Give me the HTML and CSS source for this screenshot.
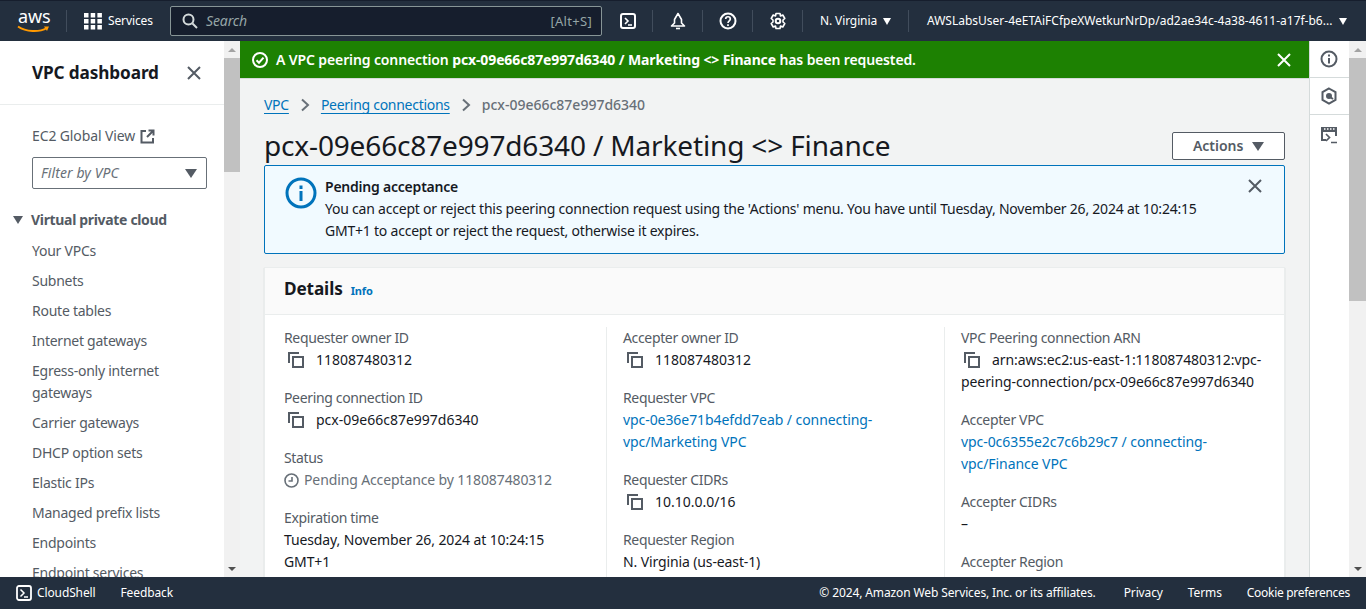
FILE: index.html
```html
<!DOCTYPE html>
<html lang="en">
<head>
    <meta charset="UTF-8">
    <title>pcx-09e66c87e997d6340 / Marketing &lt;&gt; Finance | VPC Console</title>
    <link rel="stylesheet" href="styles.css">
</head>
<body>
    <header class="topbar">
        <div class="logo">
            <span class="logo-text">aws</span>
            <svg class="logo-smile" width="33" height="8" viewBox="0 0 33 8"><path d="M1 1.500C9 7 22 7.500 30 3" fill="none" stroke="#f90" stroke-width="2"/><path d="M27 1.500L32 1.500L30 6Z" fill="#f90"/></svg>
        </div>
        <div class="services">
            <svg width="18" height="18" viewBox="0 0 18 18" fill="#fff"><rect x="0" y="1" width="4.500" height="4.500"/><rect x="6.700" y="1" width="4.500" height="4.500"/><rect x="13.400" y="1" width="4.500" height="4.500"/><rect x="0" y="7" width="4.500" height="4.500"/><rect x="6.700" y="7" width="4.500" height="4.500"/><rect x="13.400" y="7" width="4.500" height="4.500"/><rect x="0" y="13" width="4.500" height="4.500"/><rect x="6.700" y="13" width="4.500" height="4.500"/><rect x="13.400" y="13" width="4.500" height="4.500"/></svg>
            <span>Services</span>
        </div>
        <div class="search">
            <svg width="16" height="16" viewBox="0 0 16 16" fill="none" stroke="#d5dbdb" stroke-width="2"><circle cx="6.500" cy="6.500" r="5"/><path d="M10.500 10.500L15 15"/></svg>
            <span class="search-text">Search</span>
            <span class="search-key">[Alt+S]</span>
        </div>
        <div class="tool tool-first">
            <svg width="18" height="18" viewBox="0 0 18 18" fill="none" stroke="#fff" stroke-width="2"><rect x="2" y="2" width="14" height="14" rx="2"/><path d="M6 6l3 3-3 3M9 13h4" stroke-width="1.600"/></svg>
        </div>
        <div class="tool">
            <svg width="18" height="18" viewBox="0 0 18 18" fill="none" stroke="#fff" stroke-width="1.600"><path d="M9 1.500L5.500 7.500V11L2.500 14H15.500L12.500 11V7.500Z" stroke-linejoin="round"/><path d="M7 16.500h4"/></svg>
        </div>
        <div class="tool">
            <svg width="18" height="18" viewBox="0 0 18 18" fill="none" stroke="#fff" stroke-width="2"><circle cx="9" cy="9" r="7.500"/><path d="M6.700 7C6.700 4 11.300 4 11.300 7C11.300 8.800 9 8.800 9 11" stroke-width="1.700"/><path d="M9 12.200v1.800" stroke-width="1.700"/></svg>
        </div>
        <div class="tool">
            <svg width="18" height="18" viewBox="0 0 18 18" fill="none" stroke="#fff" stroke-width="2"><path d="M7 1.500h4l.5 2.500 2.300-1 2 3.500-1.800 1.500 0 1-0 1 1.800 1.500-2 3.500-2.300-1-.5 2.500h-4l-.5-2.500-2.300 1-2-3.500 1.800-1.500 0-2-1.800-1.500 2-3.500 2.300 1z" stroke-linejoin="round" stroke-width="1.600"/><circle cx="9" cy="9" r="2.300"/></svg>
        </div>
        <div class="region">N. Virginia <i class="caret caret-white"></i></div>
        <div class="account"><span>AWSLabsUser-4eETAiFCfpeXWetkurNrDp/ad2ae34c-4a38-4611-a17f-b6...</span> <i class="caret caret-white"></i></div>
    </header>

    <div class="main">
        <aside class="sidenav">
            <div class="sidenav-head">
                <h2>VPC dashboard</h2>
                <svg width="16" height="16" viewBox="0 0 16 16" stroke="#545b64" stroke-width="2"><path d="M2 2l12 12M14 2L2 14"/></svg>
            </div>
            <div class="sidenav-body">
                <div class="ec2-link">EC2 Global View
                    <svg width="15" height="15" viewBox="0 0 15 15" fill="none" stroke="#545b64" stroke-width="2"><path d="M6 2H1.500V13.500H13V9"/><path d="M7 8L13 2M8.500 1.500H13.500V6.500"/></svg>
                </div>
                <div class="vpc-filter"><em>Filter by VPC</em><i class="caret"></i></div>
                <div class="nav-section"><i class="caret"></i>Virtual private cloud</div>
                <ul class="nav-list">
                    <li>Your VPCs</li>
                    <li>Subnets</li>
                    <li>Route tables</li>
                    <li>Internet gateways</li>
                    <li>Egress-only internet gateways</li>
                    <li>Carrier gateways</li>
                    <li>DHCP option sets</li>
                    <li>Elastic IPs</li>
                    <li>Managed prefix lists</li>
                    <li>Endpoints</li>
                    <li>Endpoint services</li>
                </ul>
            </div>
        </aside>
        <div class="scrollbar scrollbar-nav">
            <div class="arrow arrow-up"></div>
            <div class="track"><div class="thumb"></div></div>
            <div class="arrow arrow-down"></div>
        </div>

        <main class="content">
            <div class="flash">
                <svg width="16" height="16" viewBox="0 0 16 16" fill="none" stroke="#fff" stroke-width="2"><circle cx="8" cy="8" r="7"/><path d="M4.500 8.200l2.500 2.500 4.500-5"/></svg>
                <p>A VPC peering connection <b>pcx-09e66c87e997d6340 / Marketing &lt;&gt; Finance</b> has been requested.</p>
                <svg width="16" height="16" viewBox="0 0 16 16" stroke="#fff" stroke-width="2"><path d="M2 2l12 12M14 2L2 14"/></svg>
            </div>
            <div class="page">
                <nav class="crumbs">
                    <a href="#">VPC</a>
                    <svg width="10" height="14" viewBox="0 0 10 14" fill="none" stroke="#687078" stroke-width="2"><path d="M2 1.500l6 5.500-6 5.500"/></svg>
                    <a href="#">Peering connections</a>
                    <svg width="10" height="14" viewBox="0 0 10 14" fill="none" stroke="#687078" stroke-width="2"><path d="M2 1.500l6 5.500-6 5.500"/></svg>
                    <span>pcx-09e66c87e997d6340</span>
                </nav>
                <div class="title-row">
                    <h1>pcx-09e66c87e997d6340 / Marketing &lt;&gt; Finance</h1>
                    <button class="actions">Actions <i class="caret"></i></button>
                </div>
                <div class="alert">
                    <svg class="alert-icon" width="32" height="32" viewBox="0 0 32 32" fill="none" stroke="#0073bb" stroke-width="3"><circle cx="16" cy="16" r="14"/><path d="M16 14v10"/><path d="M16 8.500v3.500"/></svg>
                    <div class="alert-text">
                        <strong>Pending acceptance</strong>
                        <p>You can accept or reject this peering connection request using the 'Actions' menu. You have until Tuesday, November 26, 2024 at 10:24:15 GMT+1 to accept or reject the request, otherwise it expires.</p>
                    </div>
                    <svg class="alert-close" width="16" height="16" viewBox="0 0 16 16" stroke="#545b64" stroke-width="2"><path d="M2 2l12 12M14 2L2 14"/></svg>
                </div>
                <section class="card">
                    <div class="card-head">
                        <h2>Details</h2>
                        <a href="#">Info</a>
                    </div>
                    <div class="columns">
                        <div class="col">
                            <div class="field"><label>Requester owner ID</label><div class="copy"><svg class="copy-icon" viewBox="0 0 16 16"><path d="M1 11V1H11M5 5H15V15H5Z"/></svg>118087480312</div></div>
                            <div class="field"><label>Peering connection ID</label><div class="copy"><svg class="copy-icon" viewBox="0 0 16 16"><path d="M1 11V1H11M5 5H15V15H5Z"/></svg>pcx-09e66c87e997d6340</div></div>
                            <div class="field"><label>Status</label><div class="status"><svg width="15" height="15" viewBox="0 0 15 15" fill="none" stroke="#687078" stroke-width="1.600"><circle cx="7.500" cy="7.500" r="6.500"/><path d="M8 4v4H4.500"/></svg>Pending Acceptance by 118087480312</div></div>
                            <div class="field"><label>Expiration time</label><div>Tuesday, November 26, 2024 at 10:24:15 GMT+1</div></div>
                        </div>
                        <div class="col">
                            <div class="field"><label>Accepter owner ID</label><div class="copy"><svg class="copy-icon" viewBox="0 0 16 16"><path d="M1 11V1H11M5 5H15V15H5Z"/></svg>118087480312</div></div>
                            <div class="field"><label>Requester VPC</label><div class="vpc-link"><a href="#">vpc-0e36e71b4efdd7eab / connecting-vpc/Marketing VPC</a></div></div>
                            <div class="field"><label>Requester CIDRs</label><div class="copy"><svg class="copy-icon" viewBox="0 0 16 16"><path d="M1 11V1H11M5 5H15V15H5Z"/></svg>10.10.0.0/16</div></div>
                            <div class="field"><label>Requester Region</label><div>N. Virginia (us-east-1)</div></div>
                        </div>
                        <div class="col">
                            <div class="field"><label>VPC Peering connection ARN</label><div class="arn"><svg class="copy-icon" viewBox="0 0 16 16"><path d="M1 11V1H11M5 5H15V15H5Z"/></svg>arn:aws:ec2:us-east-1:118087480312:vpc-peering-connection/pcx-09e66c87e997d6340</div></div>
                            <div class="field"><label>Accepter VPC</label><div class="vpc-link"><a href="#">vpc-0c6355e2c7c6b29c7 / connecting-vpc/Finance VPC</a></div></div>
                            <div class="field"><label>Accepter CIDRs</label><div>–</div></div>
                            <div class="field"><label>Accepter Region</label></div>
                        </div>
                    </div>
                </section>
            </div>
        </main>

        <aside class="tools-rail">
            <div class="rail-item"><svg width="18" height="18" viewBox="0 0 18 18" fill="none" stroke="#545b64" stroke-width="2"><circle cx="9" cy="9" r="7.500"/><path d="M9 8v5.500M9 4.500v2"/></svg></div>
            <div class="rail-item"><svg width="18" height="18" viewBox="0 0 18 18" fill="none" stroke="#545b64" stroke-width="2"><path d="M9 1.500l6.500 3.700v7.600L9 16.500l-6.500-3.700V5.200z"/><circle cx="9" cy="9" r="2" fill="#545b64"/><path d="M10 10l3 2"/></svg></div>
            <div class="rail-item rail-last"><svg width="18" height="18" viewBox="0 0 18 18" fill="none"><path d="M1 1H17V10H15V6H3V13H6V15H1Z" fill="#545b64"/><path d="M4 3h1.500M7 3h1.500M10 3h1.500M13 3h1.500" stroke="#fff" stroke-width="1.500"/><path d="M6 8l3.500 3.500L6 15M11 16.500h6" stroke="#545b64" stroke-width="1.700"/></svg></div>
        </aside>
        <div class="scrollbar scrollbar-page">
            <div class="arrow arrow-up"></div>
            <div class="track"><div class="thumb"></div></div>
            <div class="arrow arrow-down"></div>
        </div>
    </div>

    <footer class="bottombar">
        <div class="cloudshell">
            <svg width="16" height="16" viewBox="0 0 16 16" fill="none" stroke="#fff" stroke-width="1.800"><rect x="1" y="1" width="14" height="14" rx="2"/><path d="M4.500 4.500L8 8l-3.500 3.500M8 12h4" stroke-width="1.500"/></svg>
            <span>CloudShell</span>
        </div>
        <span class="feedback">Feedback</span>
        <span class="copyright">© 2024, Amazon Web Services, Inc. or its affiliates.</span>
        <span class="foot-link">Privacy</span>
        <span class="foot-link">Terms</span>
        <span class="foot-link foot-cookie">Cookie preferences</span>
    </footer>
</body>
</html>
```

FILE: styles.css
```css
* {
    box-sizing: border-box;
}
html, body {
    height: 100%;
}
body {
    margin: 0;
    overflow: hidden;
    display: flex;
    flex-direction: column;
    font-family: "Noto Sans", "Open Sans", sans-serif;
    font-size: 14px;
    line-height: 22px;
    letter-spacing: -0.12px;
    color: #16191f;
    background: #f2f3f3;
}
a {
    color: #0073bb;
    text-decoration: none;
}
.caret {
    display: inline-block;
    width: 0;
    height: 0;
    border-left: 6px solid transparent;
    border-right: 6px solid transparent;
    border-top: 9px solid #545b64;
}
.caret-white {
    border-left-width: 4px;
    border-right-width: 4px;
    border-top: 7px solid #fff;
    margin-left: 3px;
}

/* top bar */
.topbar {
    height: 41px;
    flex: none;
    display: flex;
    align-items: center;
    background: #232f3e;
    color: #fff;
    font-size: 12px;
    border-top: 1px solid #161e2d;
}
.logo {
    width: 66px;
    height: 40px;
    position: relative;
}
.logo-text {
    position: absolute;
    left: 18px;
    top: 4px;
    font-size: 18px;
    line-height: 22px;
}
.logo-smile {
    position: absolute;
    left: 17px;
    top: 24px;
}
.services {
    display: flex;
    align-items: center;
    gap: 6px;
    width: 104px;
    padding-left: 17px;
    border-left: 1px solid #414d5c;
    height: 22px;
}
.search {
    width: 432px;
    height: 30px;
    display: flex;
    align-items: center;
    gap: 8px;
    padding: 0 9px 0 11px;
    background: #161e2d;
    border: 1px solid #879596;
    border-radius: 2px;
    color: #95a5a6;
    font-size: 14px;
}
.search-text {
    flex: 1;
    font-style: italic;
}
.search-key {
    font-size: 13px;
    letter-spacing: 0.3px;
}
.tool {
    width: 50px;
    height: 22px;
    display: flex;
    align-items: center;
    justify-content: center;
    border-left: 1px solid #414d5c;
}
.tool-first {
    border-left: 0;
    width: 49px;
    margin-left: 1px;
}
.region {
    width: 107px;
    height: 22px;
    padding-left: 17px;
    border-left: 1px solid #414d5c;
    border-right: 1px solid #414d5c;
    white-space: nowrap;
}
.account {
    padding-left: 18px;
    white-space: nowrap;
    letter-spacing: 0;
}

/* layout */
.main {
    flex: 1;
    min-height: 0;
    display: flex;
}
.sidenav {
    width: 224px;
    flex: none;
    background: #fff;
    overflow: hidden;
}
.sidenav-head {
    height: 64px;
    padding: 0 22px 0 32px;
    display: flex;
    align-items: center;
    justify-content: space-between;
    border-bottom: 1px solid #eaeded;
}
.sidenav-head h2 {
    margin: 0;
    font-size: 17.2px;
    font-weight: 700;
}
.sidenav-body {
    padding-top: 20px;
    color: #545b64;
}
.ec2-link {
    display: flex;
    align-items: center;
    gap: 5px;
    padding-left: 32px;
}
.vpc-filter {
    margin: 10px 17px 0 32px;
    height: 32px;
    border: 1px solid #687078;
    border-radius: 2px;
    padding: 0 9px 0 8px;
    display: flex;
    align-items: center;
    justify-content: space-between;
    letter-spacing: 0.1px;
}
.vpc-filter em {
    color: #687078;
}
.nav-section {
    margin-top: 20px;
    padding-left: 13px;
    font-weight: 700;
    letter-spacing: -0.33px;
    display: flex;
    align-items: center;
    gap: 8px;
}
.nav-section .caret {
    border-left-width: 5px;
    border-right-width: 5px;
    border-top-width: 8px;
}
.nav-list {
    list-style: none;
    margin: 9px 0 0;
    padding: 0 24px 0 32px;
    letter-spacing: -0.25px;
}
.nav-list li {
    margin-bottom: 8px;
}

/* scrollbars */
.scrollbar {
    width: 16px;
    flex: none;
    display: flex;
    flex-direction: column;
    background: #f1f1f1;
}
.scrollbar-page {
    width: 17px;
}
.arrow {
    height: 17px;
    flex: none;
    display: flex;
    align-items: center;
    justify-content: center;
}
.arrow::before {
    content: "";
    border-left: 4px solid transparent;
    border-right: 4px solid transparent;
}
.arrow-up::before {
    border-bottom: 4px solid #a3a3a3;
}
.arrow-down::before {
    border-top: 4px solid #505050;
}
.track {
    flex: 1;
}
.thumb {
    background: #c1c1c1;
    height: 114px;
}
.scrollbar-page .thumb {
    height: 243px;
}

/* content */
.content {
    flex: 1;
    min-width: 0;
    overflow: hidden;
}
.flash {
    height: 38px;
    background: #1d8102;
    color: #fff;
    display: flex;
    align-items: center;
    gap: 8px;
    padding: 0 17px 0 12px;
    font-weight: 600;
    border-bottom: 1px solid #d5dbdb;
}
.flash p {
    flex: 1;
    margin: 0;
}
.flash b {
    font-weight: 700;
}
.page {
    padding: 15px 24px 0;
}
.crumbs {
    display: flex;
    align-items: center;
    gap: 11px;
    color: #687078;
}
.crumbs a {
    letter-spacing: -0.28px;
    text-decoration: underline;
    text-underline-offset: 3px;
}
.crumbs span {
    font-weight: 500;
    letter-spacing: 0;
}
.title-row {
    display: flex;
    justify-content: space-between;
    align-items: flex-end;
    margin-top: 9px;
}
.title-row h1 {
    margin: 0;
    font-size: 28px;
    line-height: 40px;
    font-weight: 400;
    letter-spacing: -0.15px;
}
.actions {
    width: 113px;
    height: 28px;
    margin-bottom: 5px;
    padding: 0 0 1px;
    font: 600 14px "Noto Sans", sans-serif;
    color: #545b64;
    background: #fff;
    border: 1px solid #545b64;
    border-radius: 2px;
}
.actions .caret {
    margin-left: 5px;
}
.alert {
    display: flex;
    gap: 8px;
    height: 89px;
    padding: 10px 21px 10px 20px;
    background: #f1faff;
    border: 1px solid #0073bb;
    border-radius: 2px;
}
.alert-icon {
    flex: none;
    margin-top: 1px;
}
.alert-text {
    flex: 1;
    letter-spacing: -0.22px;
}
.alert-text strong {
    font-weight: 600;
}
.alert-text p {
    margin: 0;
}
.alert-close {
    flex: none;
    margin: 2px 0 0 24px;
}
.card {
    margin-top: 13px;
    background: #fff;
    border: 1px solid #eaeded;
    box-shadow: 0 1px 1px rgba(0, 28, 36, 0.2);
}
.card-head {
    height: 47px;
    background: #fafafa;
    border-bottom: 1px solid #eaeded;
    padding: 0 19px 4px;
    display: flex;
    align-items: center;
    gap: 8px;
}
.card-head h2 {
    margin: 0;
    font-size: 17.2px;
    font-weight: 700;
}
.card-head a {
    font-size: 11px;
    font-weight: 700;
    padding-top: 3px;
}
.columns {
    display: grid;
    grid-template-columns: 341px 338px 1fr;
    padding-top: 12px;
}
.col {
    padding: 0 16px;
    border-left: 1px solid #eaeded;
}
.col:first-child {
    border-left: 0;
    padding-left: 19px;
}
.field {
    margin-bottom: 16px;
}
.field label {
    display: block;
    color: #545b64;
    letter-spacing: -0.35px;
}
.copy {
    display: flex;
    align-items: center;
    gap: 12px;
    padding-left: 4px;
    letter-spacing: 0;
}
.copy-icon {
    width: 16px;
    height: 16px;
    flex: none;
    fill: none;
    stroke: #545b64;
    stroke-width: 2;
}
.arn {
    letter-spacing: -0.08px;
}
.arn .copy-icon {
    display: inline-block;
    vertical-align: -3px;
    margin: 0 12px 0 3px;
}
.vpc-link {
    letter-spacing: -0.07px;
}
.status {
    display: flex;
    align-items: center;
    gap: 5px;
    color: #687078;
}

/* right rail */
.tools-rail {
    width: 40px;
    flex: none;
    background: #fff;
    border-left: 1px solid #d5dbdb;
}
.rail-item {
    height: 37px;
    padding-right: 1px;
    display: flex;
    align-items: center;
    justify-content: center;
    border-bottom: 1px solid #d5dbdb;
}
.rail-last {
    padding-top: 2px;
    border-bottom: 0;
}

/* footer */
.bottombar {
    height: 32px;
    flex: none;
    display: flex;
    align-items: center;
    background: #232f3e;
    color: #fff;
    font-size: 12px;
    padding: 0 16px;
}
.cloudshell {
    display: flex;
    align-items: center;
    gap: 5px;
}
.feedback {
    margin-left: 25px;
}
.copyright {
    margin-left: auto;
    margin-right: 3px;
}
.foot-link {
    margin-left: 25px;
}
.foot-cookie {
    letter-spacing: -0.29px;
}
```
